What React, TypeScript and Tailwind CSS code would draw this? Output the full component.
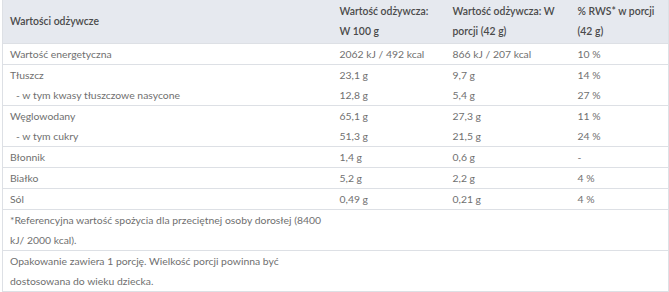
type Row = { name: string; sub?: boolean; a: string; b: string; c: string };

const groups: Row[][] = [
  [{ name: "Wartość energetyczna", a: "2062 kJ / 492 kcal", b: "866 kJ / 207 kcal", c: "10 %" }],
  [
    { name: "Tłuszcz", a: "23,1 g", b: "9,7 g", c: "14 %" },
    { name: "- w tym kwasy tłuszczowe nasycone", sub: true, a: "12,8 g", b: "5,4 g", c: "27 %" },
  ],
  [
    { name: "Węglowodany", a: "65,1 g", b: "27,3 g", c: "11 %" },
    { name: "- w tym cukry", sub: true, a: "51,3 g", b: "21,5 g", c: "24 %" },
  ],
  [{ name: "Błonnik", a: "1,4 g", b: "0,6 g", c: "-" }],
  [{ name: "Białko", a: "5,2 g", b: "2,2 g", c: "4 %" }],
  [{ name: "Sól", a: "0,49 g", b: "0,21 g", c: "4 %" }],
];

export default function App() {
  return (
    <div className="bg-white w-[669px] h-[292px] pl-[2px] font-['Lato','Liberation_Sans',sans-serif] text-[10.4px] leading-[20px] text-[#6f6f6f]">
      <table className="table-fixed border-collapse w-[666px] border-x border-b border-[#dde0e5]">
        <colgroup>
          <col className="w-[330px]" />
          <col className="w-[113px]" />
          <col className="w-[125px]" />
          <col className="w-[98px]" />
        </colgroup>
        <thead>
          <tr className="bg-[#e6e9ef] text-[#4a4a4a] h-[43px] border-b border-[#dde0e5]">
            <th className="text-left font-semibold pl-[7px] align-middle">Wartości odżywcze</th>
            <th className="text-left font-semibold pl-[7px] pr-1 align-middle">Wartość odżywcza: W 100 g</th>
            <th className="text-left font-semibold pl-[7px] pr-1 align-middle">Wartość odżywcza: W porcji (42 g)</th>
            <th className="text-left font-semibold pl-[7px] pr-1 align-middle">% RWS* w porcji (42 g)</th>
          </tr>
        </thead>
        <tbody>
          {groups.map((g) =>
            g.map((r, i) => (
              <tr key={r.name} className={i === g.length - 1 ? "border-b border-[#dde0e5]" : ""}>
                <td className={r.sub ? "pl-[13px]" : "pl-[7px]"}>{r.name}</td>
                <td className="pl-[7px]">{r.a}</td>
                <td className="pl-[7px]">{r.b}</td>
                <td className="pl-[7px]">{r.c}</td>
              </tr>
            ))
          )}
          <tr className="border-b border-[#dde0e5]">
            <td className="pl-[7px] pr-2">
              *Referencyjna wartość spożycia dla przeciętnej osoby dorosłej (8400 kJ/ 2000 kcal).
            </td>
            <td />
            <td />
            <td />
          </tr>
          <tr>
            <td className="pl-[7px] pr-2">
              Opakowanie zawiera 1 porcję. Wielkość porcji powinna być dostosowana do wieku dziecka.
            </td>
            <td />
            <td />
            <td />
          </tr>
        </tbody>
      </table>
    </div>
  );
}
